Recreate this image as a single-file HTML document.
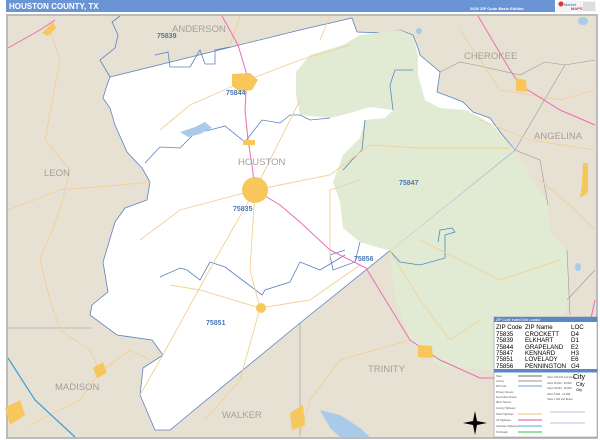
<!DOCTYPE html>
<html><head><meta charset="utf-8"><style>
html,body{margin:0;padding:0;background:#fff;width:600px;height:440px;overflow:hidden}
svg{display:block}
</style></head><body>
<svg width="600" height="440" viewBox="0 0 600 440" xmlns="http://www.w3.org/2000/svg" font-family="Liberation Sans, sans-serif">
<rect x="0" y="0" width="600" height="440" fill="#fff"/>
<rect x="6" y="0" width="549" height="12" fill="#6a94d4"/>
<text x="9" y="9" font-size="8" font-weight="bold" fill="#fff">HOUSTON COUNTY, TX</text>
<text x="470" y="10" font-size="4" fill="#fff" font-weight="bold">2026 ZIP Code Basic Edition</text>
<rect x="556" y="1" width="40" height="11" fill="#f4f4f4"/>
<circle cx="561" cy="4" r="2.5" fill="#d33"/>
<text x="564" y="6" font-size="4" fill="#36c">Market</text>
<text x="571" y="10" font-size="4" fill="#d33" font-weight="bold">MAPS</text>
<rect x="583" y="2" width="12" height="9" fill="#ddd"/>
<rect x="6" y="14" width="592" height="425" fill="#bbb"/>
<rect x="8" y="16" width="588" height="421" fill="#e7e1d3"/>
<polygon points="515,150 548,205 550,232 567,250 570,300 562,318 495,320 495,370 440,367 410,340 395,300 390,251" fill="#e1ebd4"/>
<polygon points="110,77 300,30 352,18 357,32 383,33 400,30 413,35 418,48 420,55 440,72 437,92 453,98 463,102 473,112 490,118 500,132 515,150 300,323 170,430 155,430 140,395 143,368 163,355 152,340 117,335 90,315 92,305 108,292 103,262 115,222 125,208 147,200 150,182 142,168 127,152 115,125 110,108 103,98 107,85" fill="#fff" stroke="#5a83c0" stroke-width="0.8"/>
<polygon points="296,72 310,55 343,45 360,35 400,30 413,36 418,55 418,75 425,100 440,108 465,110 480,117 495,128 515,150 390,251 360,242 343,228 340,202 333,182 343,155 360,138 365,120 385,118 393,110 370,107 350,113 330,118 300,115 296,95" fill="#e1ebd4"/>
<g stroke="#999" stroke-width="0.6" fill="none">
<path d="M8,328 L92,328"/><path d="M567,250 L570,315"/><path d="M300,323 L300,437"/>
<path d="M515,150 L565,65"/><path d="M440,72 L460,62 L480,66 L520,75 L545,62 L565,65 L595,60"/>
<path d="M515,150 L540,160 L548,205"/>
<path d="M567,300 L595,270"/>
</g>
<g stroke="#5a83c0" stroke-width="0.8" fill="none">
<path d="M110,77 L100,60 L115,48 L118,35 L112,22 L120,16"/>
<path d="M155,55 L168,52 L170,67 L190,67 L200,50 L205,64 L215,64 L215,50 L230,47"/>
<path d="M145,163 L160,147 L180,148 L195,133 L210,130 L225,126 L245,142 L262,120 L280,123 L290,115 L300,115"/>
<path d="M160,277 L180,268 L187,270 L200,280 L210,262 L225,267 L245,282 L262,295 L265,290 L290,282 L300,262 L320,270 L345,255"/>
<path d="M300,115 L310,120 L330,118"/>
<path d="M360,242 L355,262 L333,270 L330,255 L345,250"/>
<path d="M390,251 L400,262 L420,265 L445,258 L445,235 L455,232 L452,228 L440,230 L438,242"/>
<path d="M365,120 L362,150 L352,160 L343,170"/>
<path d="M393,110 L390,85 L395,70 L413,70"/>
</g>
<g stroke="#f3cf95" stroke-width="0.9" fill="none">
<path d="M50,30 L60,60 L45,140 L70,170 L60,210 L40,260 L50,300 L60,330 L90,350 L100,372 L80,400 L30,425"/>
<path d="M8,210 L60,190 L120,185 L150,182"/>
<path d="M100,372 L130,350 L150,360"/>
<path d="M255,190 L180,210 L140,240"/>
<path d="M255,190 L215,260 L160,360 L140,395"/>
<path d="M255,190 L250,270 L260,308 L240,380 L205,420"/>
<path d="M255,190 L280,140 L300,100"/><path d="M240,83 L190,105 L160,130"/>
<path d="M240,83 L300,60 L350,45"/>
<path d="M255,190 L330,175 L370,145 L420,148 L510,148"/>
<path d="M360,180 L330,190 L330,260"/>
<path d="M260,308 L310,300 L360,265"/>
<path d="M260,308 L200,290 L170,285"/>
<path d="M390,251 L420,300 L450,340 L480,320"/>
<path d="M420,240 L500,280 L560,260"/>
<path d="M410,340 L340,360 L310,400 L300,437"/>
<path d="M460,30 L500,90 L560,100 L595,90"/>
<path d="M480,120 L530,140 L595,150"/>
<path d="M330,16 L320,40"/><path d="M240,16 L230,45"/>
<path d="M540,180 L575,210 L595,230"/>
</g>
<g stroke="#ec6cb5" stroke-width="1" fill="none">
<path d="M222,16 L238,45 L247,75 L245,110 L248,140 L252,165 L255,190 L280,205 L300,222 L330,250 L366,268 L410,340 L440,360 L480,378 L495,378"/>
<path d="M478,16 L510,70 L520,85 L560,110 L595,125"/>
<path d="M595,300 L591,318"/>
<path d="M8,48 L40,30 L55,20"/>
</g>
<path d="M8,358 L35,400 L75,437" stroke="#3aa0d8" stroke-width="1.2" fill="none"/>
<g fill="#a9cbe9">
<path d="M180,132 L195,127 L205,122 L212,128 L200,134 L188,137 Z"/>
<path d="M320,410 L340,415 L360,428 L370,437 L340,437 L330,428 Z"/>
<ellipse cx="583" cy="21" rx="5" ry="4"/>
<ellipse cx="419" cy="31" rx="3" ry="3"/>
<ellipse cx="578" cy="267" rx="3" ry="4"/>
</g>
<g fill="#f8c75c">
<path d="M232,74 L250,73 L258,80 L252,90 L240,92 L232,86 Z"/>
<circle cx="255" cy="190" r="13"/>
<circle cx="261" cy="308" r="5"/>
<path d="M42,33 L53,22 L56,28 L48,36 Z"/>
<path d="M5,408 L20,400 L25,415 L10,425 Z"/>
<path d="M93,368 L103,362 L107,373 L97,378 Z"/>
<path d="M290,413 L303,405 L305,425 L292,430 Z"/>
<path d="M418,345 L432,346 L433,358 L418,357 Z"/>
<path d="M516,78 L526,80 L527,92 L516,91 Z"/>
<path d="M583,163 L588,163 L588,193 L580,198 L582,185 Z"/>
<path d="M243,140 L255,140 L255,145 L243,145 Z"/>
</g>
<g fill="#a4a09a" font-size="9.5">
<text x="172" y="32">ANDERSON</text>
<text x="44" y="176">LEON</text>
<text x="238" y="165">HOUSTON</text>
<text x="55" y="390">MADISON</text>
<text x="222" y="418">WALKER</text>
<text x="368" y="372">TRINITY</text>
<text x="464" y="59">CHEROKEE</text>
<text x="534" y="139">ANGELINA</text>
</g>
<g fill="#4a78b8" font-size="7" font-weight="bold">
<text x="157" y="38">75839</text>
<text x="226" y="95">75844</text>
<text x="233" y="211">75835</text>
<text x="206" y="325">75851</text>
<text x="399" y="185">75847</text>
<text x="354" y="261">75856</text>
</g>
<g transform="translate(475,423)" fill="#000">
<path d="M0,-12 L2,-2 L12,0 L2,2 L0,12 L-2,2 L-12,0 L-2,-2 Z"/>
</g>
<rect x="494" y="317" width="103" height="120" fill="#fff" stroke="#888" stroke-width="0.5"/>
<rect x="494" y="317" width="103" height="5" fill="#5b86c8"/>
<text x="496" y="321" font-size="3.5" fill="#fff">ZIP Code Index/Grid Locator</text>
<g font-size="6.2" fill="#000">
<text x="496" y="329">ZIP Code</text><text x="525" y="329">ZIP Name</text><text x="571" y="329">LOC</text>
<text x="496" y="336">75835</text><text x="525" y="336">CROCKETT</text><text x="571" y="336">D4</text>
<text x="496" y="342">75839</text><text x="525" y="342">ELKHART</text><text x="571" y="342">D1</text>
<text x="496" y="349">75844</text><text x="525" y="349">GRAPELAND</text><text x="571" y="349">E2</text>
<text x="496" y="355">75847</text><text x="525" y="355">KENNARD</text><text x="571" y="355">H3</text>
<text x="496" y="361">75851</text><text x="525" y="361">LOVELADY</text><text x="571" y="361">E6</text>
<text x="496" y="368">75856</text><text x="525" y="368">PENNINGTON</text><text x="571" y="368">G4</text>
</g>
<rect x="494" y="369" width="103" height="3.5" fill="#5b86c8"/>
<g font-size="2.5" fill="#555">
<text x="496" y="377">State</text><text x="496" y="382">County</text><text x="496" y="387">ZIP Code</text>
<text x="496" y="393">Primary Streets</text><text x="496" y="398">Secondary Streets</text><text x="496" y="403">Minor Streets</text>
<text x="496" y="409">County Highways</text><text x="496" y="415">State Highways</text><text x="496" y="421">US Highways</text>
<text x="496" y="427">Interstate Highways</text><text x="496" y="433">Toll Roads</text>
<text x="547" y="378">Cities 100,000 and Above</text><text x="547" y="384">Cities 50,000 - 99,999</text>
<text x="547" y="389">Cities 25,000 - 49,999</text><text x="547" y="395">Cities 5,000 - 24,999</text><text x="547" y="400">Cities 1,000 and Below</text>
</g>
<g stroke-width="1.2" fill="none">
<path d="M518,376 L542,376" stroke="#888"/><path d="M518,381 L542,381" stroke="#aaa"/>
<path d="M518,386 L542,386" stroke="#8ab0e0"/>
<path d="M518,414 L542,414" stroke="#f3cf95"/><path d="M518,420 L542,420" stroke="#ec6cb5"/>
<path d="M518,426 L542,426" stroke="#6cc0ea"/><path d="M518,432 L542,432" stroke="#5cd06c"/>
<path d="M550,412 L585,412" stroke="#6a8ec0" stroke-width="0.6"/><path d="M550,423 L585,423" stroke="#6a8ec0" stroke-width="0.6"/>
</g>
<g fill="#000"><text x="573" y="379" font-size="7">City</text><text x="576" y="386" font-size="5">City</text><text x="576" y="391" font-size="3.5">City</text></g>
</svg>
</body></html>
